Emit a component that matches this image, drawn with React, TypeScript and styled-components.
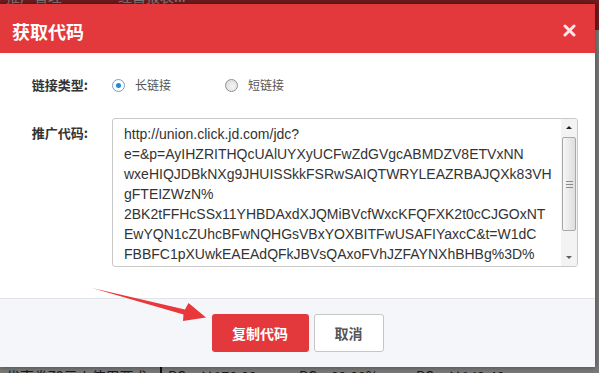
import React from "react";
import styled, { createGlobalStyle } from "styled-components";

const GlobalStyle = createGlobalStyle`
  html, body { margin: 0; padding: 0; }
  body {
    width: 599px;
    height: 373px;
    overflow: hidden;
    font-family: "Noto Sans CJK SC", "Liberation Sans", sans-serif;
  }
`;

const Page = styled.div`
  position: relative;
  width: 599px;
  height: 373px;
  overflow: hidden;
  display: flex;
  flex-direction: column;
  background: #f4f4f4;
`;

const NavBar = styled.div`
  height: 30px;
  flex: none;
  background: #e4393c;
  display: flex;
  gap: 56px;
  padding-left: 6px;
`;

const NavItem = styled.span`
  color: #fff;
  font-size: 14px;
  line-height: 16px;
  margin-top: -12px;
`;

const ContentArea = styled.div`
  flex: 1;
  display: flex;
  flex-direction: column;
  justify-content: flex-end;
`;

const BottomRow = styled.div`
  display: flex;
  align-items: center;
  height: 20px;
  margin-bottom: -13px;
  font-size: 14px;
  color: #333;
`;

const Cell = styled.span<{ $w: number; $sep?: boolean }>`
  width: ${(p) => p.$w}px;
  flex: none;
  white-space: nowrap;
  overflow: hidden;
  border-right: ${(p) => (p.$sep ? "2px solid #222" : "none")};
  padding-left: 6px;
  box-sizing: border-box;
`;

const Overlay = styled.div`
  position: absolute;
  inset: 0;
  background: rgba(0, 0, 0, 0.5);
`;

const Modal = styled.div`
  position: absolute;
  top: 4px;
  left: 0;
  width: 595px;
  height: 363px;
  background: #fff;
  display: flex;
  flex-direction: column;
  box-shadow: 0 0 6px rgba(0, 0, 0, 0.45);
`;

const Header = styled.div`
  height: 49px;
  flex: none;
  background: #e4393c;
  display: flex;
  align-items: center;
  justify-content: space-between;
  padding: 0 19px 0 12px;
`;

const Title = styled.h2`
  margin: 0;
  padding-top: 4px;
  font-size: 18px;
  font-weight: 700;
  color: #fff;
  line-height: 24px;
`;

const CloseButton = styled.button`
  border: none;
  background: none;
  padding: 0;
  margin-top: 4px;
  width: 13px;
  height: 13px;
  display: flex;
  cursor: pointer;
`;

const Body = styled.div`
  flex: 1;
  padding: 22px 17px 31px 0;
  display: grid;
  grid-template-columns: 88px 1fr;
  grid-template-rows: 20px 149px;
  column-gap: 24px;
  row-gap: 23px;
  align-content: start;
`;

const Label = styled.div<{ $top?: number }>`
  font-size: 13px;
  font-weight: 700;
  color: #333;
  line-height: 20px;
  text-align: right;
  padding-top: ${(p) => p.$top ?? 0}px;
  white-space: nowrap;
`;

const RadioGroup = styled.div`
  display: flex;
  align-items: center;
`;

const RadioOption = styled.label`
  display: flex;
  align-items: center;
  gap: 10px;
  margin-right: 54px;
  font-size: 12px;
  color: #555;
  line-height: 20px;
`;

const RadioCircle = styled.span<{ $checked?: boolean }>`
  width: 13px;
  height: 13px;
  box-sizing: border-box;
  border-radius: 50%;
  border: 1px solid ${(p) => (p.$checked ? "#7e9cc0" : "#8f8f8f")};
  background: ${(p) =>
    p.$checked
      ? "#fff"
      : "radial-gradient(circle at 60% 60%, #f4f4f4 0%, #d9d9d9 100%)"};
  display: flex;
  align-items: center;
  justify-content: center;
  &::after {
    content: "";
    width: 5px;
    height: 5px;
    border-radius: 50%;
    background: ${(p) => (p.$checked ? "#1e8ad6" : "transparent")};
  }
`;

const TextBox = styled.div`
  height: 149px;
  box-sizing: border-box;
  border: 1px solid #c9c9c9;
  border-radius: 3px;
  display: flex;
  background: #fff;
  overflow: hidden;
`;

const CodeText = styled.div`
  flex: 1;
  padding: 5px 0 0 11px;
  font-family: "Liberation Sans", Arial, sans-serif;
  font-size: 14px;
  line-height: 20px;
  color: #333;
  white-space: pre;
  overflow: hidden;
`;

const Scrollbar = styled.div`
  width: 16px;
  flex: none;
  display: flex;
  flex-direction: column;
  background: #f3f3f3;
`;

const ScrollArrow = styled.div<{ $down?: boolean }>`
  height: 17px;
  flex: none;
  display: flex;
  align-items: center;
  justify-content: center;
  &::after {
    content: "";
    width: 0;
    height: 0;
    border-left: 3px solid transparent;
    border-right: 3px solid transparent;
    ${(p) =>
      p.$down
        ? "border-top: 3px solid #606060;"
        : "border-bottom: 3px solid #222;"}
  }
`;

const ScrollTrack = styled.div`
  flex: 1;
  padding: 1px 1px 0;
`;

const Thumb = styled.div`
  height: 94px;
  box-sizing: border-box;
  border: 1px solid #a9a9a9;
  border-radius: 2px;
  background: linear-gradient(to right, #f6f6f6, #dedede);
  display: flex;
  align-items: center;
  justify-content: center;
`;

const Grip = styled.div`
  width: 7px;
  height: 7px;
  background: repeating-linear-gradient(
    to bottom,
    #8a8a8a 0,
    #8a8a8a 1px,
    transparent 1px,
    transparent 3px
  );
`;

const Footer = styled.div`
  height: 69px;
  flex: none;
  box-sizing: border-box;
  border-top: 1px solid #e3e4e8;
  background: #f5f6fa;
  display: flex;
  justify-content: center;
  align-items: center;
  gap: 5px;
`;

const Button = styled.button<{ $primary?: boolean; $w: number }>`
  width: ${(p) => p.$w}px;
  height: 38px;
  border-radius: 3px;
  font-family: "Noto Sans CJK SC", sans-serif;
  font-size: 14px;
  font-weight: 700;
  cursor: pointer;
  border: ${(p) => (p.$primary ? "none" : "1px solid #c6c6c6")};
  background: ${(p) => (p.$primary ? "#e4393c" : "#fff")};
  color: ${(p) => (p.$primary ? "#fff" : "#555")};
`;

const ArrowLayer = styled.svg`
  position: absolute;
  left: 0;
  top: 0;
  width: 599px;
  height: 373px;
  pointer-events: none;
`;

const codeLines = [
  "http://union.click.jd.com/jdc?",
  "e=&p=AyIHZRITHQcUAlUYXyUCFwZdGVgcABMDZV8ETVxNN",
  "wxeHIQJDBkNXg9JHUISSkkFSRwSAIQTWRYLEAZRBAJQXk83VH",
  "gFTEIZWzN%",
  "2BK2tFFHcSSx11YHBDAxdXJQMiBVcfWxcKFQFXK2t0cCJGOxNT",
  "EwYQN1cZUhcBFwNQHGsVBxYOXBITFwUSAFIYaxcC&t=W1dC",
  "FBBFC1pXUwkEAEAdQFkJBVsQAxoFVhJZFAYNXhBHBg%3D%",
];

export default function App() {
  return (
    <>
      <GlobalStyle />
      <Page>
        <NavBar>
          <NavItem>推广管理</NavItem>
          <NavItem>经营报表...</NavItem>
        </NavBar>
        <ContentArea>
          <BottomRow>
            <Cell $w={162} $sep>优惠券70元丨使用要求</Cell>
            <Cell $w={131}>PC：￥178.00</Cell>
            <Cell $w={117}>PC：80.00%</Cell>
            <Cell $w={189}>PC：￥142.40</Cell>
          </BottomRow>
        </ContentArea>
        <Overlay />
        <Modal>
          <Header>
            <Title>获取代码</Title>
            <CloseButton aria-label="关闭">
              <svg width="13" height="13" viewBox="0 0 13 13">
                <path
                  d="M2 2 L11 11 M11 2 L2 11"
                  stroke="#fde6e7"
                  strokeWidth="3"
                  strokeLinecap="round"
                />
              </svg>
            </CloseButton>
          </Header>
          <Body>
            <Label>链接类型:</Label>
            <RadioGroup>
              <RadioOption>
                <RadioCircle $checked />
                长链接
              </RadioOption>
              <RadioOption>
                <RadioCircle />
                短链接
              </RadioOption>
            </RadioGroup>
            <Label $top={5}>推广代码:</Label>
            <TextBox>
              <CodeText>{codeLines.join("\n")}</CodeText>
              <Scrollbar>
                <ScrollArrow />
                <ScrollTrack>
                  <Thumb>
                    <Grip />
                  </Thumb>
                </ScrollTrack>
                <ScrollArrow $down />
              </Scrollbar>
            </TextBox>
          </Body>
          <Footer>
            <Button $primary $w={97}>复制代码</Button>
            <Button $w={70}>取消</Button>
          </Footer>
        </Modal>
        <ArrowLayer viewBox="0 0 599 373">
          <polygon
            points="92,288 185,309.5 188.5,303 206,317.5 183,321 183.5,314.5"
            fill="#e8383b"
          />
        </ArrowLayer>
      </Page>
    </>
  );
}
